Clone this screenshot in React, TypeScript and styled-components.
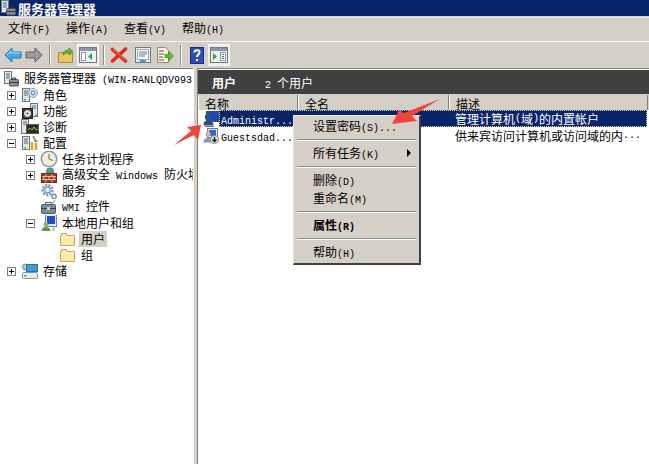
import React from 'react';
import styled, { createGlobalStyle } from 'styled-components';

const GlobalStyle = createGlobalStyle`
    html, body {
        margin: 0;
        padding: 0;
        background: #fff;
    }
    body {
        font-family: "Noto Sans CJK SC", "Liberation Sans", sans-serif;
        font-size: 12px;
        color: #000;
    }
`;

const Window = styled.div`
    position: relative;
    width: 649px;
    height: 464px;
    overflow: hidden;
    background: #d4d0c8;
    display: flex;
    flex-direction: column;
`;

const TitleBar = styled.div`
    height: 16px;
    background: #0a246a;
    display: flex;
    align-items: center;
    gap: 1px;
    color: #fff;
    font-weight: bold;
    font-size: 13px;
    line-height: 15px;
    flex: none;
`;

const MenuBar = styled.div`
    height: 22px;
    margin-top: 1px;
    padding-top: 1px;
    border-top: 1px solid #ece9e2;
    display: flex;
    align-items: center;
    padding-left: 8px;
    gap: 16px;
    flex: none;
    box-sizing: border-box;
`;

const MenuLabel = styled.span`
    line-height: 16px;
    white-space: nowrap;
`;

const Latin = styled.span<{ $bold?: boolean }>`
    font-family: "Liberation Mono", monospace;
    font-size: 10px;
    white-space: pre;
    font-weight: ${(p) => (p.$bold ? 'bold' : 'normal')};
`;

const Toolbar = styled.div`
    height: 27px;
    margin-top: 2px;
    border-top: 1px solid #f4f2ee;
    display: flex;
    align-items: center;
    padding-left: 3px;
    flex: none;
    box-sizing: border-box;
`;

const ToolButton = styled.div<{ $w: number; $pressed?: boolean }>`
    width: ${(p) => p.$w}px;
    height: 22px;
    display: flex;
    align-items: center;
    justify-content: center;
    flex: none;
    box-sizing: border-box;
    ${(p) =>
        p.$pressed
            ? `
        border: 1px solid #f8f8f8;
        background-color: #ecebe6;
        background-image: radial-gradient(#b9b6ae 0.6px, transparent 0.7px);
        background-size: 2px 2px;
    `
            : ''}
`;

const ToolSeparator = styled.div<{ $ml: number; $mr: number }>`
    width: 1px;
    height: 20px;
    background: #8f8c85;
    box-shadow: 1px 0 0 #fff;
    margin-left: ${(p) => p.$ml}px;
    margin-right: ${(p) => p.$mr}px;
    flex: none;
`;

const Workspace = styled.div`
    flex: 1;
    display: flex;
    min-height: 0;
`;

const TreePane = styled.div`
    width: 193px;
    background: #fff;
    border-top: 1px solid #808080;
    padding-top: 2px;
    flex: none;
    box-sizing: border-box;
    overflow: hidden;
`;

const TreeRow = styled.div<{ $level: number }>`
    height: 16px;
    display: flex;
    align-items: center;
    white-space: nowrap;
    overflow: hidden;
    padding-left: ${(p) => [7, 26, 60][p.$level]}px;
    svg {
        flex: none;
    }
`;

const Expander = styled.span`
    width: 9px;
    height: 9px;
    border: 1px solid #808080;
    box-sizing: border-box;
    background: #fff;
    position: relative;
    flex: none;
    margin-right: 5px;
    &::before {
        content: '';
        position: absolute;
        left: 1px;
        top: 3px;
        width: 5px;
        height: 1px;
        background: #000;
    }
`;

const PlusExpander = styled(Expander)`
    &::after {
        content: '';
        position: absolute;
        left: 3px;
        top: 1px;
        width: 1px;
        height: 5px;
        background: #000;
    }
`;

const ExpanderSpace = styled.span`
    width: 14px;
    flex: none;
`;

const RootRow = styled.div`
    height: 16px;
    display: flex;
    align-items: center;
    padding-left: 3px;
    white-space: nowrap;
    overflow: hidden;
    svg {
        flex: none;
    }
`;

const TreeLabel = styled.span<{ $selected?: boolean }>`
    margin-left: 2px;
    padding: 0 2px;
    line-height: 16px;
    flex: none;
    background: ${(p) => (p.$selected ? '#d4d0c8' : 'transparent')};
`;

const Splitter = styled.div`
    width: 4px;
    flex: none;
    border-left: 1px solid #fff;
    box-sizing: border-box;
`;

const DetailPane = styled.div`
    flex: 1;
    min-width: 0;
    border-left: 1px solid #808080;
    border-top: 1px solid #808080;
    background: #fff;
    display: flex;
    flex-direction: column;
`;

const DetailHeader = styled.div`
    height: 24px;
    margin-top: 1px;
    background: #404040;
    color: #fff;
    display: flex;
    align-items: center;
    padding-left: 14px;
    flex: none;
`;

const DetailTitle = styled.span`
    font-weight: bold;
    width: 53px;
`;

const Strip = styled.div`
    height: 1px;
    background: #d4d0c8;
    flex: none;
`;

const ColumnHeader = styled.div`
    height: 15px;
    display: flex;
    flex: none;
    background: #d4d0c8;
    overflow: hidden;
`;

const HeaderCell = styled.div<{ $w: number }>`
    width: ${(p) => p.$w}px;
    flex: none;
    padding-left: 6px;
    box-sizing: border-box;
    border-right: 1px solid #808080;
    border-left: 1px solid #fff;
    line-height: 18px;
`;

const ListRow = styled.div`
    height: 17px;
    display: flex;
    align-items: center;
    white-space: nowrap;
    padding-left: 5px;
    flex: none;
    svg {
        flex: none;
    }
`;

const SelectedBand = styled.div`
    flex: 1;
    height: 17px;
    margin-right: 2px;
    background: #0a246a;
    color: #fff;
    display: flex;
    align-items: center;
    outline: 1px dotted #e8d98a;
    outline-offset: -1px;
`;

const NameText = styled.span`
    width: 236px;
    padding-left: 2px;
    box-sizing: border-box;
    flex: none;
`;

const ContextMenu = styled.div`
    position: absolute;
    left: 293px;
    top: 115px;
    width: 128px;
    height: 150px;
    box-sizing: border-box;
    background: #d4d0c8;
    border-top: 1px solid #e8e6e0;
    border-left: 1px solid #e8e6e0;
    border-right: 2px solid #404040;
    border-bottom: 2px solid #404040;
    padding: 1px 0;
`;

const ContextItem = styled.div<{ $bold?: boolean }>`
    height: 18px;
    line-height: 18px;
    padding-left: 19px;
    position: relative;
    font-weight: ${(p) => (p.$bold ? 'bold' : 'normal')};
    white-space: nowrap;
`;

const SubArrow = styled.span`
    position: absolute;
    right: 8px;
    top: 5px;
    border-left: 4px solid #000;
    border-top: 4px solid transparent;
    border-bottom: 4px solid transparent;
`;

const ContextSeparator = styled.div`
    height: 1px;
    background: #8f8c85;
    box-shadow: 0 1px 0 #fff;
    margin: 4px 3px;
`;

const ArrowLayer = styled.svg`
    position: absolute;
    left: 0;
    top: 0;
    pointer-events: none;
`;

const Server = () => (
    <>
        <rect x="1.5" y="1.5" width="7" height="13" fill="#dfe3ea" stroke="#6d7684" />
        <path d="M3 4h4M3 6h4M3 8h4" stroke="#5b6675" />
        <rect x="3" y="12" width="2" height="1.5" fill="#46c43c" />
    </>
);

const ManagerIcon = () => (
    <svg width="17" height="16" viewBox="0 0 17 16">
        <rect x="1.5" y=".5" width="7" height="12" fill="#e4e7ec" stroke="#6d7684" />
        <path d="M3 3h4M3 5h4M3 7h4" stroke="#5b6675" />
        <rect x="6.5" y="8.5" width="9" height="6.5" rx="1" fill="#8a8f94" stroke="#4a4f55" />
        <path d="M9.5 8.5V7h3v1.500M6.500 11.500h9" stroke="#33383d" fill="none" />
    </svg>
);

const RolesIcon = () => (
    <svg width="18" height="16" viewBox="0 0 18 16">
        <Server />
        <circle cx="12" cy="6" r="4.500" fill="#cfe3f6" stroke="#7fa5cb" />
        <path d="M10 6a2 2 0 0 1 4 0 2 2 0 0 1-4 0" fill="none" stroke="#4d86bd" />
    </svg>
);

const FeaturesIcon = () => (
    <svg width="18" height="16" viewBox="0 0 18 16">
        <rect x="9.5" y=".5" width="7" height="13" fill="#dfe3ea" stroke="#6d7684" />
        <path d="M11 3h4M11 5h4" stroke="#5b6675" />
        <rect x="14" y="11.5" width="2" height="1.5" fill="#46c43c" />
        <rect x="1.5" y="5.5" width="10" height="10" fill="#3a3c40" stroke="#222" />
        <circle cx="6.5" cy="10.5" r="3" fill="#d8d8d8" stroke="#f0f0f0" />
        <circle cx="6.5" cy="10.5" r="1" fill="#555" />
    </svg>
);

const DiagnosticsIcon = () => (
    <svg width="18" height="16" viewBox="0 0 18 16">
        <rect x=".5" y=".5" width="7" height="14" fill="#dfe3ea" stroke="#6d7684" />
        <path d="M2 3h4M2 5h4" stroke="#5b6675" />
        <rect x="5.5" y="5.5" width="12" height="9" fill="#2d2d20" stroke="#555" />
        <path d="M7 11l2-2 2 2 2-3 2 3 2-1" stroke="#7fc24a" fill="none" />
    </svg>
);

const ConfigIcon = () => (
    <svg width="18" height="16" viewBox="0 0 18 16">
        <Server />
        <path d="M12 1l3 6" stroke="#9aa0a8" strokeWidth="2" />
        <path d="M11 9v6M15 8v7" stroke="#e5a11c" strokeWidth="2.400" />
        <path d="M9.500 8h3M13.500 6h3" stroke="#7a5a10" />
    </svg>
);

const ClockIcon = () => (
    <svg width="18" height="18" viewBox="0 0 18 18">
        <circle cx="9" cy="9" r="7.700" fill="#f4efdc" stroke="#8a95a5" strokeWidth="1.500" />
        <path d="M9 4v5l4 1.500" stroke="#7a6a3c" fill="none" />
    </svg>
);

const FirewallIcon = () => (
    <svg width="18" height="16" viewBox="0 0 18 16">
        <circle cx="10" cy="4.500" r="4" fill="#3f8fd0" />
        <path d="M7 3l4-2 1 4-3 1z" fill="#4caf50" />
        <rect x="1.500" y="6.500" width="15" height="9" fill="#9c3d1f" stroke="#6a2a14" />
        <path d="M2 9.500h14M2 12.500h14M6 7v2.500M12 7v2.500M4 10v2.500M9 10v2.500M14 10v2.500M6 13v2.500M12 13v2.500" stroke="#e8b79c" />
    </svg>
);

const GearIcon = () => (
    <svg width="18" height="17" viewBox="0 0 18 17">
        <circle cx="7.500" cy="7" r="4.700" fill="none" stroke="#7ba2c4" strokeWidth="3" strokeDasharray="2.200 1" />
        <circle cx="7.500" cy="7" r="2.800" fill="#eef3f7" stroke="#5c84a6" />
        <circle cx="14" cy="13.500" r="2.200" fill="#eef3f7" stroke="#6b8fae" strokeWidth="1.400" />
    </svg>
);

const WmiIcon = () => (
    <svg width="18" height="16" viewBox="0 0 18 16">
        <rect x="1.500" y="5.500" width="14" height="9" rx="1" fill="#7f8b96" stroke="#4d5660" />
        <path d="M5.500 5.500v-2h6v2" fill="none" stroke="#4d5660" />
        <path d="M1.500 9.500h14" stroke="#39414a" />
        <rect x="7" y="8" width="3" height="3" fill="#d0d5da" />
        <path d="M12 5l3-4" stroke="#b5bac0" strokeWidth="1.500" />
    </svg>
);

const UsersIcon = () => (
    <svg width="18" height="18" viewBox="0 0 18 18">
        <rect x="5.500" y=".5" width="11" height="12" fill="#dfe3ea" stroke="#7a8390" />
        <rect x="7" y="2" width="8" height="8" fill="#1d4fc4" />
        <circle cx="6" cy="10.500" r="2.500" fill="#8fb26a" />
        <path d="M1.500 17c0-3 2-4 4.500-4s4.500 1 4.500 4z" fill="#6f9150" />
        <path d="M12 13h3v4h-3z" fill="#c9ccd2" />
    </svg>
);

const FolderIcon = () => (
    <svg width="17" height="14" viewBox="0 0 17 14">
        <path d="M.5 13.500v-10h1v-2h5v2h8v10z" fill="#fbe9a9" stroke="#c9a85c" />
        <path d="M1 5h13" stroke="#fff5cf" />
    </svg>
);

const StorageIcon = () => (
    <svg width="18" height="17" viewBox="0 0 18 17">
        <circle cx="4.500" cy="4" r="3" fill="#bfc4c9" stroke="#7c8288" />
        <rect x="5.500" y="1.500" width="11" height="7" fill="#3aa0dc" stroke="#356f96" />
        <rect x="1.500" y="9.500" width="15" height="6" rx="1" fill="#e8eaec" stroke="#8a9096" />
        <rect x="3" y="12" width="3" height="1.500" fill="#46c43c" />
    </svg>
);

const AdminIcon = () => (
    <svg width="16" height="17" viewBox="0 0 16 17">
        <rect x="3.500" y="1.500" width="12" height="10" fill="#27509c" stroke="#31507f" />
        <rect x="5" y="3" width="9" height="7" fill="#1448c8" />
        <circle cx="5" cy="7" r="3.200" fill="#33527e" />
        <path d="M.5 15.500c0-4 2-5 4.500-5s5.500 1 5.500 5z" fill="#2f4d78" />
        <path d="M2 16.500h9" stroke="#5c6f8f" />
    </svg>
);

const GuestIcon = () => (
    <svg width="16" height="17" viewBox="0 0 16 17">
        <rect x="4.500" y="1.500" width="10" height="9" fill="#e5e8ee" stroke="#6d7e9e" />
        <rect x="6" y="3" width="7" height="6" fill="#2a66dc" />
        <circle cx="5" cy="7" r="2.700" fill="#d9b48c" />
        <path d="M.5 15.500c0-3.500 2-4.500 4.500-4.500s5 1 5 4.500z" fill="#7d9cc4" />
        <circle cx="11.500" cy="12.500" r="4" fill="#e8e8e8" stroke="#888" />
        <path d="M11.500 10v4M9.500 12.500l2 2 2-2" stroke="#111" fill="none" strokeWidth="1.300" />
    </svg>
);

const BackIcon = () => (
    <svg width="18" height="16" viewBox="0 0 18 16">
        <path d="M1 8l7-7v4h9v6H8v4z" fill="#4aa8e8" stroke="#1e74b8" />
        <path d="M3 8l4-4v2h9" stroke="#b8e2fa" fill="none" />
    </svg>
);

const ForwardIcon = () => (
    <svg width="18" height="16" viewBox="0 0 18 16">
        <path d="M17 8l-7-7v4H1v6h9v4z" fill="#9b9b9b" stroke="#5f5f5f" />
    </svg>
);

const UpFolderIcon = () => (
    <svg width="16" height="17" viewBox="0 0 16 17">
        <path d="M.5 15.500v-10h14v10z" fill="#e9c766" stroke="#a98a3c" />
        <path d="M5 8c0-4 3-5 6-5V1l4 3.500L11 8V6c-2 0-4 0-6 2z" fill="#5fb33b" stroke="#3b7d22" strokeWidth=".7" />
    </svg>
);

const PaneIcon = ({ side }: { side: 'left' | 'right' }) => (
    <svg width="18" height="16" viewBox="0 0 18 16">
        <rect x=".5" y=".5" width="17" height="15" fill="#eef0f2" stroke="#6f7780" />
        <rect x="1" y="1" width="16" height="3" fill="#8b96a3" />
        {side === 'left' ? (
            <>
                <rect x="2.500" y="5.500" width="4" height="8" fill="#fff" stroke="#8b96a3" />
                <path d="M13 6v7l-4-3.500z" fill="#2aa84a" />
            </>
        ) : (
            <>
                <path d="M3 6v7l4-3.500z" fill="#2aa84a" />
                <rect x="10.500" y="5.500" width="5" height="8" fill="#fff" stroke="#8b96a3" />
                <path d="M12 7.500h2M12 9.500h2M12 11.500h2" stroke="#56606c" />
            </>
        )}
    </svg>
);

const DeleteIcon = () => (
    <svg width="18" height="16" viewBox="0 0 18 16">
        <path d="M2.500 2.500l13 11.500M15.500 2l-13 12" stroke="#e02b20" strokeWidth="3.600" strokeLinecap="round" />
        <path d="M3 2l12 10.500" stroke="#ff8a7a" strokeWidth=".8" />
    </svg>
);

const PropertiesIcon = () => (
    <svg width="16" height="16" viewBox="0 0 16 16">
        <rect x=".5" y=".5" width="15" height="15" fill="#eef1f4" stroke="#6f7780" />
        <rect x="2.500" y="2.500" width="11" height="10" fill="#fff" stroke="#a0a8b0" />
        <path d="M4 5h8M4 7h8M4 9h6" stroke="#6a7580" />
        <rect x="5" y="13" width="6" height="2" fill="#35a7e0" />
    </svg>
);

const ExportIcon = () => (
    <svg width="18" height="17" viewBox="0 0 18 17">
        <path d="M1.500 .5h8l3 3v12h-11z" fill="#fbf5d8" stroke="#8b8b7c" />
        <path d="M3 4h5M3 7h5M3 10h4M3 13h5" stroke="#555" />
        <path d="M9 7.500h4v-3l4.500 4.500-4.500 4.500v-3H9z" fill="#5cc23c" stroke="#37831f" strokeWidth=".7" />
    </svg>
);

const HelpIcon = () => (
    <svg width="14" height="17" viewBox="0 0 14 17">
        <rect x=".5" y=".5" width="13" height="16" fill="#2b4fb8" stroke="#1a2f78" />
        <path d="M4.500 5.500c0-3 5-3 5 0 0 2-2.500 2-2.500 4.500" fill="none" stroke="#fff" strokeWidth="2" />
        <rect x="6" y="12" width="2" height="2" fill="#fff" />
    </svg>
);

type TreeEntry = {
    indent: number;
    label: React.ReactNode;
    icon: React.ReactNode;
    expander?: 'plus' | 'minus' | 'none';
    selected?: boolean;
};

const tree: TreeEntry[] = [
    { indent: 0, label: '角色', icon: <RolesIcon />, expander: 'plus' },
    { indent: 0, label: '功能', icon: <FeaturesIcon />, expander: 'plus' },
    { indent: 0, label: '诊断', icon: <DiagnosticsIcon />, expander: 'plus' },
    { indent: 0, label: '配置', icon: <ConfigIcon />, expander: 'minus' },
    { indent: 1, label: '任务计划程序', icon: <ClockIcon />, expander: 'plus' },
    {
        indent: 1,
        label: (
            <>
                高级安全<Latin> Windows </Latin>防火墙
            </>
        ),
        icon: <FirewallIcon />,
        expander: 'plus',
    },
    { indent: 1, label: '服务', icon: <GearIcon />, expander: 'none' },
    {
        indent: 1,
        label: (
            <>
                <Latin>WMI </Latin>控件
            </>
        ),
        icon: <WmiIcon />,
        expander: 'none',
    },
    { indent: 1, label: '本地用户和组', icon: <UsersIcon />, expander: 'minus' },
    { indent: 2, label: '用户', icon: <FolderIcon />, selected: true },
    { indent: 2, label: '组', icon: <FolderIcon /> },
    { indent: 0, label: '存储', icon: <StorageIcon />, expander: 'plus' },
];

function TreeItem({ item }: { item: TreeEntry }) {
    return (
        <TreeRow $level={item.indent}>
            {item.expander === 'plus' && <PlusExpander />}
            {item.expander === 'minus' && <Expander />}
            {item.expander === 'none' && <ExpanderSpace />}
            {item.icon}
            <TreeLabel $selected={item.selected}>{item.label}</TreeLabel>
        </TreeRow>
    );
}

function App() {
    return (
        <Window>
            <GlobalStyle />
            <TitleBar>
                <ManagerIcon />
                服务器管理器
            </TitleBar>
            <MenuBar>
                <MenuLabel>文件<Latin>(F)</Latin></MenuLabel>
                <MenuLabel>操作<Latin>(A)</Latin></MenuLabel>
                <MenuLabel>查看<Latin>(V)</Latin></MenuLabel>
                <MenuLabel>帮助<Latin>(H)</Latin></MenuLabel>
            </MenuBar>
            <Toolbar>
                <ToolButton $w={19}><BackIcon /></ToolButton>
                <ToolButton $w={23}><ForwardIcon /></ToolButton>
                <ToolSeparator $ml={4} $mr={5} />
                <ToolButton $w={22}><UpFolderIcon /></ToolButton>
                <ToolButton $w={22} $pressed><PaneIcon side="left" /></ToolButton>
                <ToolSeparator $ml={4} $mr={4} />
                <ToolButton $w={22}><DeleteIcon /></ToolButton>
                <ToolButton $w={26}><PropertiesIcon /></ToolButton>
                <ToolButton $w={18}><ExportIcon /></ToolButton>
                <ToolSeparator $ml={6} $mr={5} />
                <ToolButton $w={22}><HelpIcon /></ToolButton>
                <ToolButton $w={22} $pressed><PaneIcon side="right" /></ToolButton>
            </Toolbar>
            <Workspace>
                <TreePane>
                    <RootRow>
                        <ManagerIcon />
                        <TreeLabel>服务器管理器<Latin> (WIN-RANLQDV993</Latin></TreeLabel>
                    </RootRow>
                    {tree.map((item, index) => (
                        <TreeItem key={index} item={item} />
                    ))}
                </TreePane>
                <Splitter />
                <DetailPane>
                    <DetailHeader>
                        <DetailTitle>用户</DetailTitle>
                        <span><Latin>2 </Latin>个用户</span>
                    </DetailHeader>
                    <Strip />
                    <ColumnHeader>
                        <HeaderCell $w={100}>名称</HeaderCell>
                        <HeaderCell $w={151}>全名</HeaderCell>
                        <HeaderCell $w={199}>描述</HeaderCell>
                    </ColumnHeader>
                    <ListRow>
                        <AdminIcon />
                        <SelectedBand>
                            <NameText><Latin>Administr...</Latin></NameText>
                            管理计算机<Latin>(</Latin>域<Latin>)</Latin>的内置帐户
                        </SelectedBand>
                    </ListRow>
                    <ListRow>
                        <GuestIcon />
                        <NameText><Latin>Guestsdad...</Latin></NameText>
                        供来宾访问计算机或访问域的内<Latin>...</Latin>
                    </ListRow>
                </DetailPane>
            </Workspace>
            <ContextMenu>
                <ContextItem>设置密码<Latin>(S)...</Latin></ContextItem>
                <ContextSeparator />
                <ContextItem>
                    所有任务<Latin>(K)</Latin>
                    <SubArrow />
                </ContextItem>
                <ContextSeparator />
                <ContextItem>删除<Latin>(D)</Latin></ContextItem>
                <ContextItem>重命名<Latin>(M)</Latin></ContextItem>
                <ContextSeparator />
                <ContextItem $bold>属性<Latin $bold>(R)</Latin></ContextItem>
                <ContextSeparator />
                <ContextItem>帮助<Latin>(H)</Latin></ContextItem>
            </ContextMenu>
            <ArrowLayer width="649" height="464" viewBox="0 0 649 464">
                <polygon points="174,145 191,131 187,127 201,125 198,140 194,135" fill="#f0453a" />
                <polygon points="440,99 412,116 417,121 392,124 399,110 404,113" fill="#f0453a" />
            </ArrowLayer>
        </Window>
    );
}

export default App;
